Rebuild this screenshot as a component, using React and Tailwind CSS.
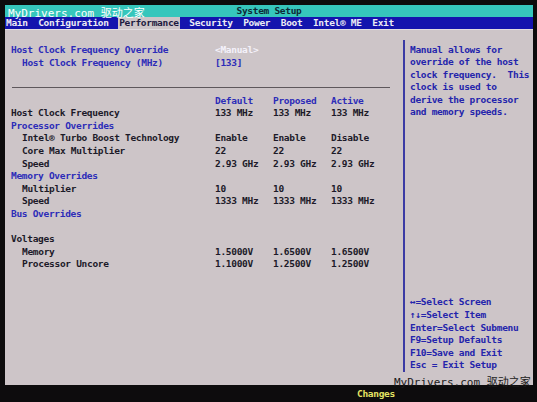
import React from 'react';

const rows = [
    { kind: 'head', cols: ['Default', 'Proposed', 'Active'] },
    { label: 'Host Clock Frequency', cols: ['133 MHz', '133 MHz', '133 MHz'] },
    { label: 'Processor Overrides', blue: true },
    { label: 'Intel® Turbo Boost Technology', indent: true, cols: ['Enable', 'Enable', 'Disable'] },
    { label: 'Core Max Multiplier', indent: true, cols: ['22', '22', '22'] },
    { label: 'Speed', indent: true, cols: ['2.93 GHz', '2.93 GHz', '2.93 GHz'] },
    { label: 'Memory Overrides', blue: true },
    { label: 'Multiplier', indent: true, cols: ['10', '10', '10'] },
    { label: 'Speed', indent: true, cols: ['1333 MHz', '1333 MHz', '1333 MHz'] },
    { label: 'Bus Overrides', blue: true },
    { label: '' },
    { label: 'Voltages' },
    { label: 'Memory', indent: true, cols: ['1.5000V', '1.6500V', '1.6500V'] },
    { label: 'Processor Uncore', indent: true, cols: ['1.1000V', '1.2500V', '1.2500V'] },
];

const menu = ['Main', 'Configuration', 'Performance', 'Security', 'Power', 'Boot', 'Intel® ME', 'Exit'];

const helpTop = [
    'Manual allows for',
    'override of the host',
    'clock frequency.  This',
    'clock is used to',
    'derive the processor',
    'and memory speeds.',
];

const helpKeys = [
    '↔=Select Screen',
    '↑↓=Select Item',
    'Enter=Select Submenu',
    'F9=Setup Defaults',
    'F10=Save and Exit',
    'Esc = Exit Setup',
];

function Row({ row }) {
    const isHead = row.kind === 'head';
    return (
        <div className="grid grid-cols-[204px_58px_58px_58px] h-[12.6px] leading-[12.6px] whitespace-pre">
            <div
                className={
                    (row.indent ? 'pl-[11px] ' : '') +
                    (row.blue ? 'text-[#2c2cb8]' : 'text-[#1c1a28]')
                }
            >
                {row.label}
            </div>
            {(row.cols || []).map((c, i) => (
                <div key={i} className={isHead ? 'text-[#2c2cb8]' : 'text-[#1c1a28]'}>
                    {c}
                </div>
            ))}
        </div>
    );
}

export default function App() {
    return (
        <div className="relative w-[537px] h-[402px] overflow-hidden bg-[#0d0c0d] font-['DejaVu_Sans_Mono',monospace] font-bold text-[9.5px] tracking-[-0.3px]">
            <div className="flex flex-col pt-[5px] pl-[5px] pr-[4px]">
                {/* title bar */}
                <div className="h-[12px] bg-[#36c6bc] flex items-center justify-center text-[#0e2a36] leading-none">
                    System Setup
                </div>

                {/* menu bar */}
                <div className="h-[12px] bg-[#1414ae] flex items-center gap-[8.5px] text-[#ecebf4] leading-[12px]">
                    {menu.map((m) => (
                        <span
                            key={m}
                            className={
                                'px-[1px] ' +
                                (m === 'Performance' ? 'bg-[#cdc5c8] text-[#1c1a40]' : '')
                            }
                        >
                            {m}
                        </span>
                    ))}
                </div>

                {/* main panel */}
                <div className="h-[356px] bg-[#cdc5c8] border-t border-[#e2dde0] flex">
                    <div className="w-[398px] pl-[6px] pt-[14px]">
                        <div className="grid grid-cols-[204px_120px] leading-[12.6px] whitespace-pre text-[#2c2cb8]">
                            <div>Host Clock Frequency Override</div>
                            <div className="text-[#f4f2fb]">&lt;Manual&gt;</div>
                            <div className="pl-[11px]">Host Clock Frequency (MHz)</div>
                            <div>[133]</div>
                        </div>

                        <div className="mt-[18px] ml-[1px] w-[378px] h-px bg-[#5e585c]" />

                        <div className="mt-[6.5px]">
                            {rows.map((r, i) => (
                                <Row key={i} row={r} />
                            ))}
                        </div>
                    </div>

                    {/* help pane */}
                    <div className="mt-[10px] mb-[13px] border-l-2 border-[#3b3ba4] pl-[5px] pt-[3.5px] flex flex-col justify-between text-[#2424ac] leading-[12.6px] whitespace-pre">
                        <div>
                            {helpTop.map((t) => (
                                <div key={t}>{t}</div>
                            ))}
                        </div>
                        <div>
                            {helpKeys.map((t) => (
                                <div key={t}>{t}</div>
                            ))}
                        </div>
                    </div>
                </div>

                {/* bottom status */}
                <div className="h-[17px] flex items-center pl-[352px] text-[#e4e464] leading-none pt-[1px]">
                    Changes
                </div>
            </div>

            {/* watermarks */}
            <div className="absolute left-[8px] top-[8px] text-[11px] font-normal tracking-[0px] leading-none text-white font-['DejaVu_Sans_Mono','Noto_Sans_CJK_SC',monospace]">
                MyDrivers.com 驱动之家
            </div>
            <div className="absolute left-[394px] top-[377px] text-[11px] font-normal tracking-[0px] leading-none text-[#1a1a1a] font-['DejaVu_Sans_Mono','Noto_Sans_CJK_SC',monospace]">
                MyDrivers.com 驱动之家
            </div>
        </div>
    );
}
